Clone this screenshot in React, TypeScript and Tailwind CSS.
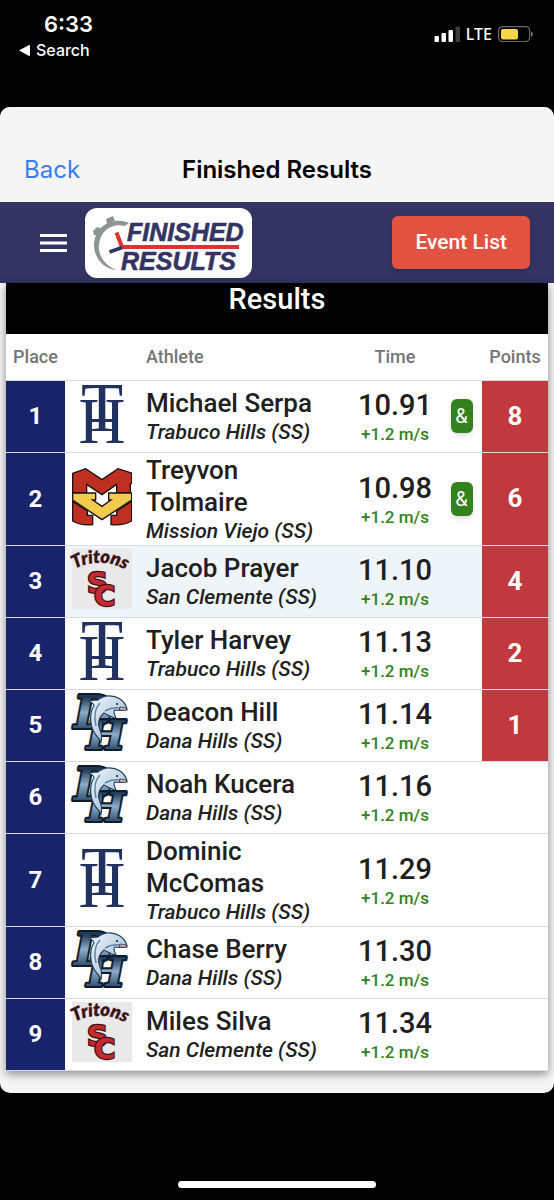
import React from 'react';

interface Result {
  place: number;
  athlete: string;
  school: string;
  team: 'TH' | 'MV' | 'SC' | 'DH';
  time: string;
  wind: string;
  flagged?: boolean;
  points?: number;
}

const RESULTS: Result[] = [
  { place: 1, athlete: 'Michael Serpa', school: 'Trabuco Hills (SS)', team: 'TH', time: '10.91', wind: '+1.2 m/s', flagged: true, points: 8 },
  { place: 2, athlete: 'Treyvon Tolmaire', school: 'Mission Viejo (SS)', team: 'MV', time: '10.98', wind: '+1.2 m/s', flagged: true, points: 6 },
  { place: 3, athlete: 'Jacob Prayer', school: 'San Clemente (SS)', team: 'SC', time: '11.10', wind: '+1.2 m/s', points: 4 },
  { place: 4, athlete: 'Tyler Harvey', school: 'Trabuco Hills (SS)', team: 'TH', time: '11.13', wind: '+1.2 m/s', points: 2 },
  { place: 5, athlete: 'Deacon Hill', school: 'Dana Hills (SS)', team: 'DH', time: '11.14', wind: '+1.2 m/s', points: 1 },
  { place: 6, athlete: 'Noah Kucera', school: 'Dana Hills (SS)', team: 'DH', time: '11.16', wind: '+1.2 m/s' },
  { place: 7, athlete: 'Dominic McComas', school: 'Trabuco Hills (SS)', team: 'TH', time: '11.29', wind: '+1.2 m/s' },
  { place: 8, athlete: 'Chase Berry', school: 'Dana Hills (SS)', team: 'DH', time: '11.30', wind: '+1.2 m/s' },
  { place: 9, athlete: 'Miles Silva', school: 'San Clemente (SS)', team: 'SC', time: '11.34', wind: '+1.2 m/s' },
];

const SELECTED_PLACE = 3;

const TrabucoLogo = () => (
  <svg className="block w-full overflow-visible" viewBox="0 0 60 60" fill="#22315f" fontFamily="'Liberation Serif', serif">
    <text x="30" y="59" fontSize="65" textAnchor="middle">H</text>
    <text x="30" y="47" fontSize="69" textAnchor="middle">T</text>
  </svg>
);

const MissionLogo = () => (
  <svg className="block w-full" viewBox="216 273 180 178" stroke="#1c1210" strokeWidth="4" strokeLinejoin="miter">
    <path fill="#bf3023" d="M218 292 257 278 306 311 354 278 395 291V323H391V351H350V325L306 356 260 325V351H218Z" />
    <path fill="#bf3023" d="M218 376 262 405V418H278V446Q245 450 218 435Z" />
    <path fill="#bf3023" d="M395 376 350 405V418H333V446Q368 450 395 435Z" />
    <path fill="#f0cb4e" d="M218 351H287V372H278L306 391 333 372H326V351H395V372L306 431 218 372Z" />
  </svg>
);

const SanClementeLogo = () => (
  <svg className="block w-full overflow-visible" viewBox="0 0 60 60">
    <rect width="60" height="60" fill="#e9e9e9" />
    <defs>
      <path id="tritons-arc" d="M3 20C12 14 28 12 40 15Q52 18 66 30" />
    </defs>
    <text fontFamily="Lato, sans-serif" fontSize="18" fontWeight="900" fontStyle="italic" fill="#2a1315" stroke="#5b1c20" strokeWidth="0.6">
      <textPath href="#tritons-arc">Tritons</textPath>
    </text>
    <g fontFamily="'DejaVu Sans', sans-serif" fontWeight="700" fontSize="29" fill="#c42a30" stroke="#3c1215" strokeWidth="2.5" paintOrder="stroke">
      <text x="15" y="44">S</text>
      <text x="22" y="57">C</text>
    </g>
  </svg>
);

const DanaLogo = () => (
  <svg className="block w-full overflow-visible" viewBox="0 0 60 60">
    <defs>
      <linearGradient id="dana-letter" x1="0" y1="0" x2="0" y2="1">
        <stop offset="0.2" stopColor="#1f3a57" />
        <stop offset="0.5" stopColor="#8fabc6" />
        <stop offset="0.85" stopColor="#25456a" />
      </linearGradient>
      <linearGradient id="dana-fin" x1="0" y1="0" x2="1" y2="1">
        <stop offset="0" stopColor="#f3f8fc" />
        <stop offset="1" stopColor="#8fb0cd" />
      </linearGradient>
    </defs>
    <g fontFamily="'DejaVu Serif', serif" fontStyle="italic" fontWeight="700" fill="url(#dana-letter)" stroke="#101b29" strokeWidth="4" paintOrder="stroke" strokeLinejoin="round">
      <text x="2" y="35" fontSize="44">D</text>
      <text x="15" y="56" fontSize="40">H</text>
    </g>
    <path
      fill="url(#dana-fin)"
      stroke="#24405e"
      strokeWidth="1.2"
      d="M55 16C53 7 44 2 35 3C31 4 28 5 26 7L17 8C20 10 22 11 22 13C17 20 18 32 22 39C24 43 27 45 29 49C30 44 30 41 28 37C25 30 27 24 32 20C35 21 39 25 44 25C42 21 41 18 43 17C47 18 51 17 55 17Z"
    />
    <path fill="none" stroke="#5f83a5" strokeWidth="1.5" d="M28 10C23 15 22 24 24 33M33 18C38 15 42 14 48 15" />
    <path fill="#d9a9a4" stroke="#24405e" strokeWidth="0.8" d="M48 14 55 15 53 17.5 47 17Z" />
    <circle cx="45" cy="11" r="1" fill="#14202e" />
  </svg>
);

const TEAM_LOGOS: Record<Result['team'], React.FC> = {
  TH: TrabucoLogo,
  MV: MissionLogo,
  SC: SanClementeLogo,
  DH: DanaLogo,
};

const BrandLogo = () => (
  <svg className="block h-[70px] w-[167px] rounded-xl bg-white" viewBox="0 0 167 70">
    <path fill="#8d9494" d="M44 15C29 8 9 17 9 38C10 53 21 61 31 62C20 57 13 48 14 37C15 22 28 15 40 18Z" />
    <path fill="#8d9494" d="M21 11 28 8 30 13 27 14 28 17 24 18 23 15 22 16ZM8 23 12 19 15 20 18 24 14 29 11 27 9 27Z" />
    <path fill="none" stroke="#dc3431" strokeWidth="4" d="M31.500 24.500 37 39H154" />
    <path stroke="#333462" strokeWidth="3.500" d="M24.500 44 37 39.500" />
    <g fontFamily="'Liberation Sans', Arial, sans-serif" fontSize="25" fontWeight="700" fontStyle="italic" fill="#333462" stroke="#333462" strokeWidth="0.6">
      <text x="42" y="33">FINISHED</text>
      <text x="36" y="62">RESULTS</text>
    </g>
  </svg>
);

const StatusBar = () => (
  <div className="flex h-[107px] items-start justify-between pl-[19px] pr-5 pt-[10px] font-['Inter',sans-serif] text-white">
    <div>
      <div className="pl-[25px] text-[22px] font-semibold leading-7">6:33</div>
      <button type="button" className="flex items-center gap-[6px] text-base font-medium leading-6">
        <svg className="h-[11px] w-[11px]" viewBox="0 0 11 11" fill="currentColor"><path d="M0 5.500 10 0Q11 0 11 1V10Q11 11 10 11Z" /></svg>
        Search
      </button>
    </div>
    <div className="flex items-center gap-[6px] pt-3">
      <svg className="h-4 w-[26px]" viewBox="0 0 26 16" fill="#fff">
        <rect x="0.500" y="10" width="4.500" height="6" rx="1" />
        <rect x="7.500" y="7" width="4.500" height="9" rx="1" />
        <rect x="14.500" y="4" width="4.500" height="12" rx="1" />
        <rect x="21.500" y="0.500" width="4.500" height="15.500" rx="1" fill="#3d3d3d" />
      </svg>
      <span className="font-['Noto_Sans',sans-serif] text-base font-medium leading-6">LTE</span>
      <svg className="h-4 w-9" viewBox="0 0 36 16">
        <rect x="0.600" y="0.600" width="31" height="15" rx="4" fill="none" stroke="#6c6a61" strokeWidth="1.200" />
        <rect x="3" y="3" width="17" height="10.500" rx="2" fill="#f8d548" />
        <path d="M33 5.500Q35 6 35 8T33 10.500Z" fill="#77756c" />
      </svg>
    </div>
  </div>
);

const ResultRow: React.FC<{ result: Result }> = ({ result }) => {
  const Logo = TEAM_LOGOS[result.team];
  const selected = result.place === SELECTED_PLACE;

  return (
    <tr className={`h-[72px] border-b border-[#d9dce0] ${selected ? 'bg-[#eff4f8]' : 'bg-white'}`}>
      <td className="bg-[#18236c] text-center text-2xl font-bold text-white">{result.place}</td>
      <td className="px-[7px] pb-1">
        <Logo />
      </td>
      <td className="py-px pl-[7px] pr-[14px]">
        <div className="text-[26px] font-medium leading-8">{result.athlete}</div>
        <div className="text-[21px] font-medium italic leading-[26px]">{result.school}</div>
      </td>
      <td className="pt-[2px] text-center">
        <div className="text-[29px] font-medium leading-[34px]">{result.time}</div>
        <div className="text-[17px] font-medium leading-6 text-[#338220]">{result.wind}</div>
      </td>
      <td>
        {result.flagged && (
          <span className="mx-auto flex h-[34px] w-[22px] items-center justify-center rounded-md bg-[#34821e] text-xl text-white shadow-md">&amp;</span>
        )}
      </td>
      <td className={result.points ? 'bg-[#c1383e] text-center text-[26px] font-bold text-white' : ''}>{result.points}</td>
    </tr>
  );
};

export default function App() {
  return (
    <div className="flex min-h-screen flex-col bg-black font-['Roboto',sans-serif] text-[#202020]">
      <StatusBar />

      <div className="overflow-hidden rounded-[10px] bg-[#f5f5f5]">
        {/* Sheet title */}
        <div className="grid h-[95px] grid-cols-[1fr_auto_1fr] items-end border-b border-white bg-[#f5f5f6] px-6 pb-[15px] font-['Inter',sans-serif] text-2xl text-black">
          <button type="button" className="justify-self-start text-[#3b7cf0]">Back</button>
          <h1 className="font-semibold">Finished Results</h1>
        </div>

        {/* App bar */}
        <header className="flex h-[81px] items-center bg-[#333462] pl-[39px] pr-6">
          <button type="button" aria-label="Menu" className="mr-[18px]">
            <svg className="h-[18px] w-7" viewBox="0 0 28 18" fill="#fff">
              <path d="M1 0H28V3H1ZM1 7.500H28V10.500H1ZM1 15H28V18H1Z" />
            </svg>
          </button>
          <BrandLogo />
          <button type="button" className="ml-auto h-[53px] rounded-md bg-[#e25241] px-[23px] text-[21px] font-medium text-white shadow-md">
            Event List
          </button>
        </header>

        <main className="px-[6px] pb-[22px]">
          <div className="bg-white shadow-[0_3px_9px_rgba(0,0,0,0.45)]">
            <h2 className="h-[51px] bg-black text-center text-[29px] font-medium leading-8 text-white">Results</h2>
            <table className="w-full table-fixed border-collapse">
              <colgroup>
                <col className="w-[59px]" />
                <col className="w-[74px]" />
                <col />
                <col className="w-[92px]" />
                <col className="w-[41px]" />
                <col className="w-[66px]" />
              </colgroup>
              <thead>
                <tr className="h-[46px] border-b border-[#d9dce0] text-lg text-[#757575]">
                  <th className="font-medium">Place</th>
                  <th></th>
                  <th className="pl-[7px] text-left font-medium">Athlete</th>
                  <th className="font-medium">Time</th>
                  <th></th>
                  <th className="font-medium">Points</th>
                </tr>
              </thead>
              <tbody>
                {RESULTS.map(r => <ResultRow key={r.place} result={r} />)}
              </tbody>
            </table>
          </div>
        </main>
      </div>

      {/* Home indicator */}
      <div className="mx-auto mb-3 mt-auto h-[7px] w-[198px] rounded-full bg-white" />
    </div>
  );
}
